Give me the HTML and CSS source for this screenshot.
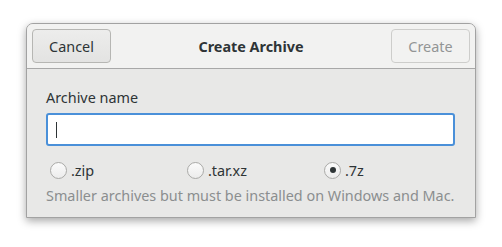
FILE: index.html
```html
<!DOCTYPE html>
<html lang="en">
<head>
    <meta charset="UTF-8">
    <title>Create Archive</title>
    <link rel="stylesheet" href="styles.css">
</head>
<body>

<div class="dialog">
    <div class="header">
        <button class="btn">Cancel</button>
        <div class="title">Create Archive</div>
        <button class="btn" disabled>Create</button>
    </div>
    <div class="content">
        <label class="label" for="name">Archive name</label>
        <div class="entry"><span class="caret"></span></div>
        <div class="formats">
            <div class="radio"><span class="dot"></span>.zip</div>
            <div class="radio"><span class="dot"></span>.tar.xz</div>
            <div class="radio"><span class="dot checked"></span>.7z</div>
        </div>
        <div class="hint">Smaller archives but must be installed on Windows and Mac.</div>
    </div>
</div>

</body>
</html>
```

FILE: styles.css
```css
body {
    margin: 0;
    padding: 23px 26px;
    background: #ffffff;
    font-family: "Noto Sans", sans-serif;
    font-size: 14.4px;
    color: #2e3436;
}

.dialog {
    width: 450px;
    height: 195px;
    border: 1px solid #a2a2a2;
    border-radius: 7px 7px 0 0;
    background: #e8e8e7;
    box-shadow: 0 3px 9px rgba(0, 0, 0, 0.35);
    box-sizing: border-box;
    overflow: hidden;
}

.header {
    display: flex;
    align-items: center;
    justify-content: space-between;
    height: 45px;
    padding: 0 5px;
    background: #f2f2f1;
    border-bottom: 1px solid #a8a8a8;
    box-sizing: border-box;
}

.btn {
    width: 79px;
    height: 34px;
    font-family: inherit;
    font-size: 14.4px;
    color: #2e3436;
    background: linear-gradient(#ededec, #e3e3e2);
    border: 1px solid #b6b6b3;
    border-radius: 4px;
}

.btn:disabled {
    background: #f2f2f1;
    color: #929595;
    border-color: #cdcdcb;
}

.title {
    font-weight: bold;
}

.content {
    padding: 19px 20px 0 19px;
}

.label {
    display: block;
    height: 20px;
    line-height: 20px;
}

.entry {
    height: 33px;
    margin-top: 5px;
    border: 2px solid #4a90d9;
    border-radius: 3px;
    background: #ffffff;
    box-sizing: border-box;
    display: flex;
    align-items: center;
    padding-left: 8px;
}

.caret {
    width: 1px;
    height: 16px;
    background: #2e3436;
}

.formats {
    display: grid;
    grid-template-columns: 137px 137px 1fr;
    margin-top: 13px;
    height: 22px;
    align-items: center;
}

.radio {
    display: flex;
    align-items: center;
    gap: 4px;
    padding-left: 4px;
}

.dot {
    width: 15px;
    height: 15px;
    border: 1px solid #aaaaa8;
    border-radius: 50%;
    background: linear-gradient(#fbfbfb, #ececec);
    display: flex;
    align-items: center;
    justify-content: center;
}

.dot.checked::after {
    content: "";
    width: 6px;
    height: 6px;
    border-radius: 50%;
    background: #2e3436;
}

.hint {
    margin-top: 5px;
    line-height: 20px;
    color: #8b8e8f;
    white-space: nowrap;
}
```
